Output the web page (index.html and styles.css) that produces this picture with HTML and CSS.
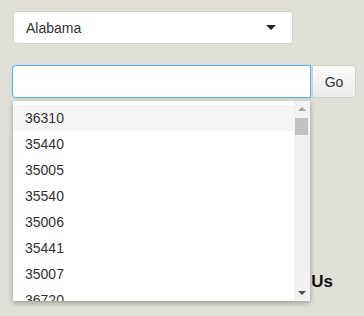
FILE: index.html
```html
<!DOCTYPE html>
<html lang="en">

<head>
    <meta charset="utf-8">
    <title>Zip Lookup</title>
    <link rel="stylesheet" href="styles.css">
</head>

<body>
    <div class="page">
        <div class="state-select">
            <span class="state-value">Alabama</span>
            <span class="caret"></span>
        </div>

        <div class="search-wrap">
            <div class="search-row">
                <input class="search-input" type="text" />
                <button class="go-btn" type="button">Go</button>
            </div>

            <!-- autocomplete list, lies over the content below -->
            <div class="suggest">
                <ul class="suggest-list">
                    <li class="active">36310</li>
                    <li>35440</li>
                    <li>35005</li>
                    <li>35540</li>
                    <li>35006</li>
                    <li>35441</li>
                    <li>35007</li>
                    <li>36720</li>
                </ul>
                <div class="scrollbar">
                    <span class="arrow-up"></span>
                    <span class="thumb"></span>
                    <span class="arrow-down"></span>
                </div>
            </div>
        </div>

        <h3 class="contact-title">Contact Us</h3>
    </div>
</body>

</html>
```

FILE: styles.css
```css
html,
body {
    min-height: 316px;
}

body {
    margin: 0;
    background-color: #dfdfd8;
    font-family: "Liberation Sans", Arial, sans-serif;
    font-size: 14px;
    color: #333;
}

.page {
    min-height: 316px;
    padding: 11px 0 0 12px;
    box-sizing: border-box;
}

.state-select {
    display: flex;
    align-items: center;
    justify-content: space-between;
    box-sizing: border-box;
    width: 280px;
    height: 33px;
    margin-left: 1px;
    padding: 0 16px 0 12px;
    background-color: #fff;
    border: 1px solid #d4d4ce;
    border-radius: 4px;
}

.caret {
    width: 0;
    height: 0;
    border-left: 5px solid transparent;
    border-right: 5px solid transparent;
    border-top: 5px solid #222;
}

.search-wrap {
    position: relative;
    margin-top: 21px;
}

.search-row {
    display: flex;
}

.search-input {
    box-sizing: border-box;
    width: 299px;
    height: 33px;
    margin: 0;
    border: 1px solid #66afe9;
    border-radius: 4px 0 0 4px;
    box-shadow: 0 0 2px rgba(102, 175, 233, 0.5);
    outline: none;
}

.go-btn {
    box-sizing: border-box;
    width: 44px;
    height: 33px;
    margin-left: 1px;
    padding: 0;
    font-family: inherit;
    font-size: 14px;
    color: #333;
    background: linear-gradient(#fafafa, #ececec);
    border: 1px solid #d0d0ca;
    border-radius: 0 4px 4px 0;
}

.suggest {
    position: absolute;
    top: 36px;
    left: 1px;
    z-index: 2;
    display: flex;
    width: 297px;
    height: 200px;
    overflow: hidden;
    background-color: #fff;
    box-shadow: 0 2px 5px rgba(0, 0, 0, 0.3);
}

.suggest-list {
    flex: 1;
    margin: 0;
    padding: 4px 0 0 0;
    list-style: none;
}

.suggest-list li {
    height: 26px;
    line-height: 26px;
    padding-left: 12px;
}

.suggest-list .active {
    background-color: #f5f5f5;
}

.scrollbar {
    position: relative;
    width: 16px;
    background-color: #f1f1f1;
}

.arrow-up,
.arrow-down {
    position: absolute;
    left: 4px;
    width: 0;
    height: 0;
    border-left: 4px solid transparent;
    border-right: 4px solid transparent;
}

.arrow-up {
    top: 6px;
    border-bottom: 4px solid #a3a3a3;
}

.arrow-down {
    bottom: 6px;
    border-top: 4px solid #505050;
}

.thumb {
    position: absolute;
    top: 17px;
    left: 1px;
    width: 13px;
    height: 17px;
    background-color: #c1c1c1;
}

.contact-title {
    width: 321px;
    margin: 174px 0 0 0;
    text-align: right;
    font-size: 17px;
    font-weight: bold;
    color: #111;
}
```
